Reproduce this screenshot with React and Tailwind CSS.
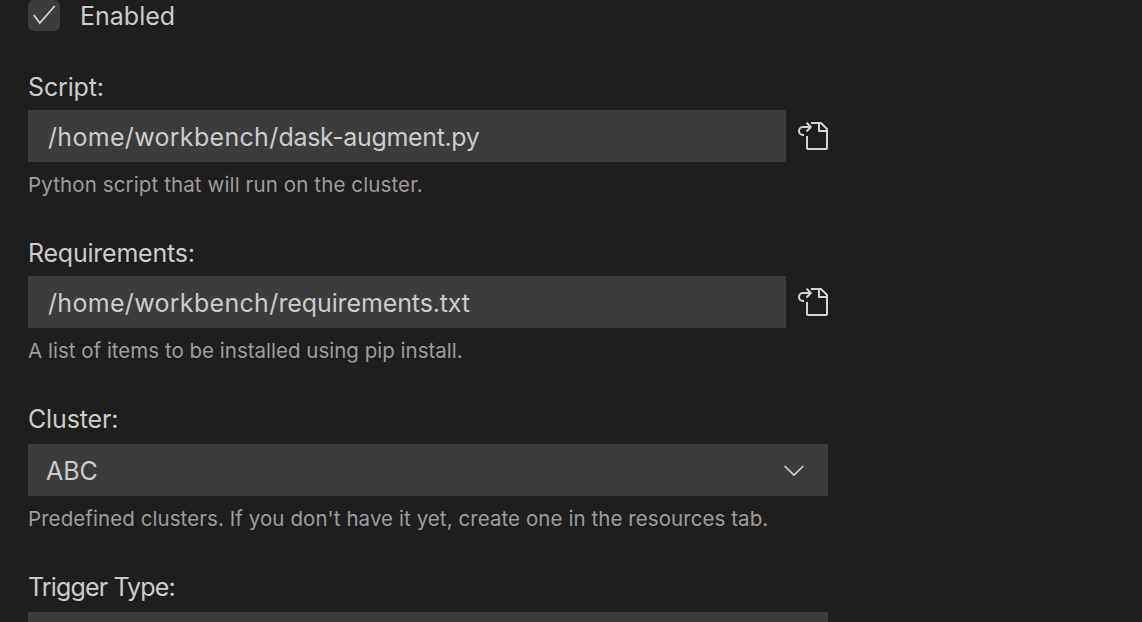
function FileIcon() {
  return (
    <svg className="ml-3 h-8 w-8 shrink-0" viewBox="0 0 32 32" fill="none" stroke="#d4d4d4" strokeWidth="2" strokeLinejoin="round">
      <path d="M9 16V28Q9 29 10 29H28Q29 29 29 28V9L23 3H13" />
      <path d="M21 3V11H29" />
      <path d="M8.5 2.8L12.8 7L8.5 11.5M12.8 7H5A4 4 0 0 0 5 15H6" />
    </svg>
  );
}

function FileField({ label, labelClass, folder, file, fileClass, hint, hintClass }) {
  return (
    <div className="mb-[38px]">
      <div className={`h-8 text-[25px] leading-8 ${labelClass}`}>{label}</div>
      <div className="mt-[7px] flex items-center">
        <div className="flex h-[52px] w-[758px] items-center bg-[#3c3c3c] pt-px pl-5">
          <span className="text-[25px] leading-8">
            <span className="tracking-[0.31px]">{folder}</span>
            <span className={fileClass}>{file}</span>
          </span>
        </div>
        <FileIcon />
      </div>
      <div className={`mt-[9px] h-7 text-[20.5px] leading-7 text-[#9d9d9d] ${hintClass}`}>{hint}</div>
    </div>
  );
}

export default function App() {
  return (
    <main className="h-[622px] w-[1142px] overflow-hidden bg-[#1e1e1e] pl-7 font-['Inter',sans-serif] whitespace-nowrap text-[#cccccc]">
      <div className="mb-[39px] flex h-8 items-start">
        <div className="h-[31px] w-8 rounded-md bg-[#3c3c3c]">
          <svg className="h-[31px] w-8" viewBox="0 0 32 31" fill="none" stroke="#d4d4d4" strokeWidth="1.8">
            <path d="M5.8 15L11.8 23L26.7 6" />
          </svg>
        </div>
        <span className="ml-5 text-[25px] leading-8">Enabled</span>
      </div>
      <FileField
        label="Script:"
        labelClass="tracking-[-0.15px]"
        folder="/home/workbench/"
        file="dask-augment.py"
        fileClass="tracking-[-0.35px]"
        hint="Python script that will run on the cluster."
        hintClass="tracking-[0.12px]"
      />
      <FileField
        label="Requirements:"
        labelClass="tracking-[-0.23px]"
        folder="/home/workbench/"
        file="requirements.txt"
        fileClass="tracking-[-0.12px]"
        hint="A list of items to be installed using pip install."
        hintClass="tracking-[0.01px]"
      />
      <div className="mb-[38px]">
        <div className="h-8 text-[25px] leading-8 tracking-[-0.15px]">Cluster:</div>
        <div className="mt-[9px] flex h-[52px] w-[800px] items-center justify-between bg-[#3c3c3c] pr-6 pl-[18px]">
          <span className="pt-px text-[25px] leading-8">ABC</span>
          <svg className="h-5 w-5" viewBox="0 0 20 20" fill="none" stroke="#d4d4d4" strokeWidth="1.7">
            <path d="M.7 6L10 15L19.3 6" />
          </svg>
        </div>
        <div className="mt-[9px] h-7 text-[20.5px] leading-7 tracking-[0.075px] text-[#9d9d9d]">Predefined clusters. If you don't have it yet, create one in the resources tab.</div>
      </div>
      <div className="h-8 text-[25px] leading-8 tracking-[-0.86px]">Trigger Type:</div>
      <div className="mt-[9px] h-[52px] w-[800px] bg-[#3c3c3c]" />
    </main>
  );
}
